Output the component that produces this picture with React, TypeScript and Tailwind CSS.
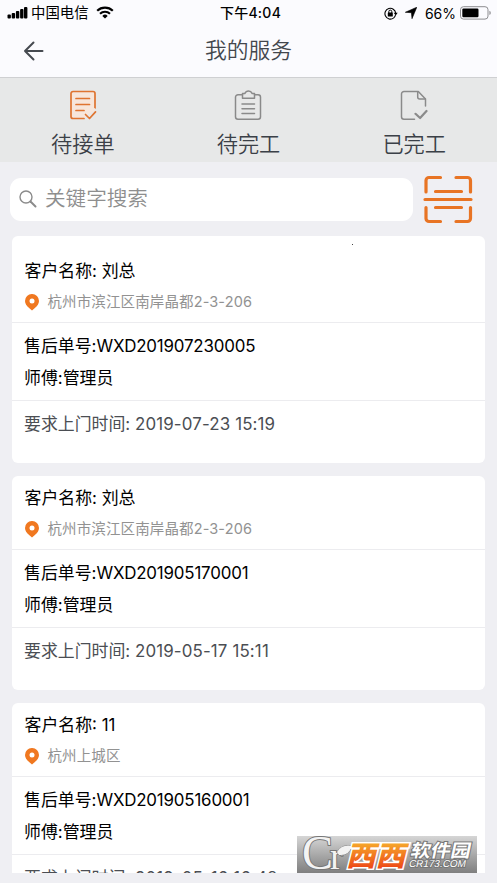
import { useState } from 'react';

const orders = [
  { id: 'WXD201907230005', customer: '刘总', address: '杭州市滨江区南岸晶都2-3-206', master: '管理员', time: '2019-07-23 15:19' },
  { id: 'WXD201905170001', customer: '刘总', address: '杭州市滨江区南岸晶都2-3-206', master: '管理员', time: '2019-05-17 15:11' },
  { id: 'WXD201905160001', customer: '11', address: '杭州上城区', master: '管理员', time: '2019-05-16 16:48' },
];

function StatusBar() {
  return (
    <div className="grid h-[26px] grid-cols-3 items-center text-[13.5px] text-black">
      <div className="flex items-center pl-[7px]">
        <svg width="21" height="12" viewBox="0 0 21 12">
          <rect x="0.5" y="7.5" width="3.4" height="4" rx="1" />
          <rect x="4.7" y="6" width="3.4" height="5.5" rx="1" />
          <rect x="8.9" y="4" width="3.4" height="7.5" rx="1" />
          <rect x="13.1" y="2" width="3.4" height="9.5" rx="1" />
          <rect x="17" y="0" width="3.4" height="11.5" rx="1" />
        </svg>
        <span className="ml-[3px] text-[14.4px] whitespace-nowrap">中国电信</span>
        <svg className="ml-[7px]" width="18" height="13" viewBox="0 0 18 13" fill="none" stroke="#000">
          <path d="M1.2 4.8a11.2 11.2 0 0 1 15.6 0" strokeWidth="2.2" />
          <path d="M4 7.7a7.2 7.2 0 0 1 10 0" strokeWidth="2.1" />
          <path d="M9 12.6 6.3 9.9a3.9 3.9 0 0 1 5.4 0z" fill="#000" stroke="none" />
        </svg>
      </div>
      <div className="pl-[4px] text-center text-[14px] leading-[22px] font-medium tracking-[0.25px] whitespace-nowrap">下午4:04</div>
      <div className="flex items-center justify-end pr-[5px]">
        <svg width="14" height="13" viewBox="0 0 14 13" fill="none" stroke="#000">
          <path d="M9.5 11.1A5.4 5.4 0 1 1 11.7 6" strokeWidth="1.1" />
          <path d="M9.7 5.8h4l-2 2.6z" fill="#000" stroke="none" />
          <path d="M11.5 8.2a5.5 5.5 0 0 1-2 2.9" strokeWidth="1.1" />
          <rect x="3.8" y="5.6" width="5" height="3.8" rx="0.5" fill="#000" stroke="none" />
          <path d="M4.8 6V4.6a1.5 1.5 0 0 1 3 0V6" />
        </svg>
        <svg className="ml-[7px]" width="12" height="12" viewBox="0 0 12 12">
          <path d="M11.8.2 7 11.7 6.400 5.700.3 5.300z" stroke="#000" strokeWidth="0.6" strokeLinejoin="round" />
        </svg>
        <span className="ml-[8px] text-[14px]">66%</span>
        <svg className="ml-[4px]" width="32" height="14" viewBox="0 0 32 14">
          <rect x="0.5" y="0.7" width="27.5" height="12.4" rx="3" fill="none" stroke="#8d8d90" />
          <rect x="2.3" y="2.5" width="16.2" height="8.8" rx="1.2" />
          <path d="M29.4 4.7v4.4q1.4-.6 1.4-2.2t-1.4-2.2z" fill="#8d8d90" />
        </svg>
      </div>
    </div>
  );
}

function PendingIcon() {
  return (
    <svg width="28" height="31" viewBox="0 0 28 31" fill="none" stroke="#df7431" strokeWidth="1.7" strokeLinecap="round" strokeLinejoin="round">
      <path d="M26 18V3.500A2 2 0 0 0 24 1.500H4A2 2 0 0 0 2 3.500v23A2 2 0 0 0 4 28.500H15" fill="#f7e6db" />
      <path d="M17 25 V22.500 L26 18 V21z" fill="#f7e6db" stroke="none" />
      <path d="M7 8.500h13.500M7 14.500h13.500M7 20.500h8M16.500 24.500l4 4 6-6.600" />
    </svg>
  );
}

function ClipboardIcon() {
  return (
    <svg width="28" height="31" viewBox="0 0 28 31" fill="none" stroke="#8a8a8a" strokeWidth="1.5" strokeLinecap="round" strokeLinejoin="round">
      <path d="M8.500 4.800H4A2.500 2.500 0 0 0 1.500 7.300v19.400A2.500 2.500 0 0 0 4 29.200h20a2.500 2.500 0 0 0 2.500-2.500V7.300a2.500 2.500 0 0 0-2.500-2.500h-3.500" />
      <path d="M8.500 8.300V3.600h2.200q1.300-2.600 3.800-2.600t3.800 2.600h2.200v4.700zM8 14h12.500M8 18.700h12.500M8 23.600h12.500" />
    </svg>
  );
}

function DoneIcon() {
  return (
    <svg width="28" height="31" viewBox="0 0 28 31" fill="none" stroke="#8a8a8a" strokeWidth="1.5" strokeLinecap="round" strokeLinejoin="round">
      <path d="M14.500 29.200H4A2.500 2.500 0 0 1 1.500 26.700V4a2.500 2.500 0 0 1 2.500-2.500h14.300L25.500 9v7" />
      <path d="M17.700 1.800V7a2 2 0 0 0 2 2h5.500" />
      <path d="m15.500 23.800 4.600 4.200L26.500 21" strokeWidth="2.2" />
    </svg>
  );
}

function ScanIcon() {
  return (
    <svg width="50" height="50" viewBox="0 0 50 50" fill="none" stroke="#e87424" strokeWidth="3.2" strokeLinecap="round">
      <path d="M3 17V5.500A3 3 0 0 1 6 2.500h11.500M33 2.500h11.500a3 3 0 0 1 3 3V17M3 32.500V43.500a3 3 0 0 0 3 3h11.500M33 46.500h11.500a3 3 0 0 0 3-3V32.500" />
      <path d="M12.500 16.500h26M2 24.500h46M12.500 32.500h26" />
    </svg>
  );
}

function Watermark() {
  return (
    <div className="absolute top-[836px] left-[297px] h-[37px] w-[180px] bg-linear-to-b from-[#d6d6d6] to-[#7f7f7f]">
      <svg className="overflow-visible" width="180" height="37" viewBox="0 0 180 37" fontFamily='"Noto Sans CJK SC", sans-serif'>
        <defs>
          <linearGradient id="gold" x1="0" y1="0" x2="0" y2="1">
            <stop offset="0.15" stopColor="#f7b52e" />
            <stop offset="0.85" stopColor="#ed4a17" />
          </linearGradient>
        </defs>
        <g fill="#f3f3f3" stroke="#777" strokeWidth="2" paintOrder="stroke" fontFamily='"Liberation Serif", serif'>
          <text x="5" y="33" fontSize="48" textLength="31" lengthAdjust="spacingAndGlyphs">C</text>
          <text x="33" y="33" fontSize="38">r</text>
          <path d="M40 16q5-8 15-6-3 10-13 9z" strokeWidth="1" />
        </g>
        <g transform="translate(49 30) skewX(-14)" fill="url(#gold)" stroke="#fff" strokeWidth="3" paintOrder="stroke" fontSize="28" fontWeight="900">
          <text x="0" y="0" textLength="59" lengthAdjust="spacingAndGlyphs">西西</text>
        </g>
        <g transform="skewX(-12)" fill="#fff" stroke="#777" strokeWidth="2" paintOrder="stroke" fontWeight="bold">
          <text x="117" y="20.500" fontSize="18" textLength="60" lengthAdjust="spacingAndGlyphs">软件园</text>
          <text x="118" y="31" fontSize="10" textLength="57" lengthAdjust="spacingAndGlyphs" fontFamily='"Liberation Sans", sans-serif' fontWeight="normal">CR173.COM</text>
        </g>
      </svg>
    </div>
  );
}

const tabs = [
  { label: '待接单', icon: <PendingIcon /> },
  { label: '待完工', icon: <ClipboardIcon /> },
  { label: '已完工', icon: <DoneIcon /> },
];

export default function App() {
  const [keyword, setKeyword] = useState('');

  return (
    <div className="relative flex h-[883px] w-[497px] flex-col overflow-hidden bg-[#efeff3] font-['Inter','Noto_Sans_CJK_SC',sans-serif]">
      <header className="h-[78px] shrink-0 border-b border-[#cfd0d2] bg-[#fbfbfe]">
        <StatusBar />
        <div className="grid h-[49px] grid-cols-[60px_1fr_60px] items-center">
          <svg className="ml-[23px]" width="22" height="20" viewBox="0 0 22 20" fill="none" stroke="#464a50" strokeWidth="2" strokeLinecap="round" strokeLinejoin="round">
            <path d="M10.500 1.500 2 10l8.500 8.500M2 10h17.500" />
          </svg>
          <h1 className="text-center text-[21.8px] font-[350] text-[#43474d]">我的服务</h1>
        </div>
      </header>

      <nav className="grid h-[84px] shrink-0 grid-cols-3 bg-[#e7e8e8]">
        {tabs.map((tab) => (
          <button key={tab.label} className="flex flex-col items-center pt-[12px]">
            {tab.icon}
            <span className="mt-[7px] text-[21.2px] leading-8 font-[350] text-[#3b4047]">{tab.label}</span>
          </button>
        ))}
      </nav>

      <div className="flex h-[74px] shrink-0 items-center pl-[10px]">
        <label className="flex h-[43px] w-[403px] items-center rounded-[11px] bg-white pl-[8px]">
          <svg width="20" height="20" viewBox="0 0 20 20" fill="none" stroke="#8b8b8b" strokeWidth="1.4" strokeLinecap="round">
            <circle cx="8" cy="8" r="6" />
            <path d="m12.500 12.500 5 5" strokeWidth="2" />
          </svg>
          <input
            value={keyword}
            onChange={(e) => setKeyword(e.target.value)}
            placeholder="关键字搜索"
            className="ml-[7px] w-[340px] text-[20.6px] font-[350] outline-none placeholder:text-[#8e8e8e]"
          />
        </label>
        <div className="mt-[2px] ml-[9.500px]">
          <ScanIcon />
        </div>
      </div>

      <main className="mx-[12px] flex h-[637px] shrink-0 flex-col gap-[13px] overflow-hidden">
        {orders.map((order, i) => (
          <section
            key={order.id}
            className={`shrink-0 rounded-[6px] bg-white text-[16.9px] whitespace-nowrap text-black ${i === 0 ? 'h-[227px] pt-[13px]' : 'h-[214px]'}`}
          >
            <div className="h-[74px] border-b border-[#ececef] px-[12.500px] pt-[10px]">
              <p className="h-[25px] leading-[25px]">客户名称: {order.customer}</p>
              <div className="mt-[6px] flex h-[24px] items-center text-[14.5px] text-[#929292]">
                <svg width="14" height="17" viewBox="0 0 14 17">
                  <path d="M7 0a6.900 6.900 0 0 1 7 6.900q0 3.600-4.400 7.400L7 16.600l-2.600-2.300Q0 10.500 0 6.900A6.900 6.900 0 0 1 7 0z" fill="#f07820" />
                  <circle cx="7" cy="7" r="2.500" fill="#fff" />
                </svg>
                <span className="ml-[9px] tracking-[0.12px]">{order.address}</span>
              </div>
            </div>
            <div className="h-[78px] border-b border-[#ececef] px-[12px] pt-[7px] leading-[32px]">
              <p>
                售后单号:<span className="tracking-[-0.18px]">{order.id}</span>
              </p>
              <p>师傅:{order.master}</p>
            </div>
            <p className="px-[12px] pt-[7px] leading-[32px] text-[#4b4e53]">
              要求上门时间: <span className="tracking-[0.14px]">{order.time}</span>
            </p>
          </section>
        ))}
      </main>

      <div className="absolute top-[244px] left-[352px] size-px bg-[#444]" />
      <Watermark />
    </div>
  );
}
